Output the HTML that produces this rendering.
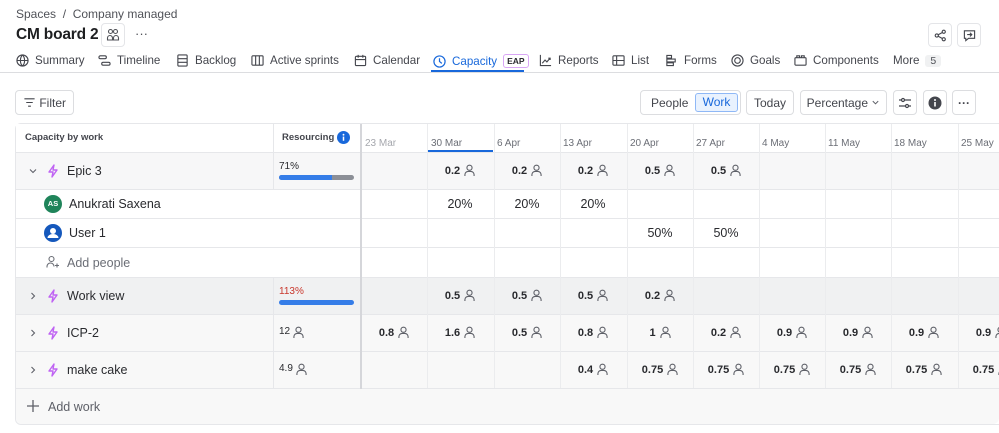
<!DOCTYPE html>
<html><head><meta charset="utf-8"><style>
*{box-sizing:border-box;margin:0;padding:0}
body{width:999px;height:433px;overflow:hidden;background:#fff;font-family:"Liberation Sans",sans-serif;color:#292a2e;position:relative}
.a{position:absolute}
.tab{position:absolute;top:54px;font-size:11.6px;color:#44464d;display:flex;align-items:center;gap:6px}
.tab svg{width:13px;height:13px}
.btn{position:absolute;border:1px solid #dcdde0;border-radius:4px;background:#fff;font-size:12px;color:#44464d;display:flex;align-items:center;justify-content:center}
.row{position:absolute;left:16px;width:983px;border-bottom:1px solid #e6e7ea}
.vl{position:absolute;top:124px;height:264px;width:1px;background:#ebecee}
.c{position:absolute;width:66px;text-align:center;font-size:11px;font-weight:bold;color:#292a2e;display:flex;align-items:center;justify-content:center;gap:4px}
.p{font-size:12.5px;font-weight:normal}
.dt{position:absolute;top:138px;font-size:10px;color:#6b6e76}
.nm{position:absolute;font-size:12.5px;color:#292a2e}
.chev{position:absolute;left:28px}
</style></head><body>
<svg width="0" height="0" style="position:absolute"><defs>
<symbol id="pi" viewBox="0 0 12 14"><circle cx="6" cy="4" r="2.8" fill="none" stroke="#5e6068" stroke-width="1.2"/><path d="M1 13v-1.5a3.5 3.5 0 0 1 3.5-3.5h3a3.5 3.5 0 0 1 3.5 3.5V13" fill="none" stroke="#5e6068" stroke-width="1.2"/></symbol>
<symbol id="ep" viewBox="0 0 14 14"><path d="M8 1L3 8h4l-1 5 5-7H7z" fill="none" stroke="#bf63f3" stroke-width="1.4" stroke-linejoin="round"/></symbol>
<symbol id="cr" viewBox="0 0 10 10"><path d="M3.5 2l3 3-3 3" fill="none" stroke="#5e6068" stroke-width="1.1"/></symbol>
<symbol id="cd" viewBox="0 0 10 10"><path d="M2 3.5l3 3 3-3" fill="none" stroke="#5e6068" stroke-width="1.1"/></symbol>
</defs></svg>

<div class="a" style="left:16px;top:7px;font-size:12px;color:#505258">Spaces &nbsp;/&nbsp; Company managed</div>
<div class="a" style="left:16px;top:26px;font-size:15.5px;font-weight:bold;color:#1e1f21;letter-spacing:-0.2px">CM board 2</div>
<div class="btn" style="left:101px;top:23px;width:24px;height:24px;border-color:#e4e5e8"><svg width="14" height="14" viewBox="0 0 14 14" fill="none" stroke="#505258" stroke-width="1.1"><circle cx="4.5" cy="3.5" r="2"/><circle cx="9.5" cy="3.5" r="2"/><path d="M1.5 12v-2a2.5 2.5 0 0 1 5 0v2zM7.5 12v-2a2.5 2.5 0 0 1 5 0v2z"/></svg></div>
<div class="a" style="left:135px;top:26px;font-size:13px;color:#505258">···</div>
<div class="btn" style="left:928px;top:23px;width:24px;height:24px;border-color:#e4e5e8"><svg width="13" height="13" viewBox="0 0 14 14" fill="none" stroke="#44464d" stroke-width="1.2"><circle cx="10.5" cy="3" r="1.7"/><circle cx="3" cy="7" r="1.7"/><circle cx="10.5" cy="11" r="1.7"/><path d="M4.5 6.2l4.5-2.4M4.5 7.8l4.5 2.4"/></svg></div>
<div class="btn" style="left:957px;top:23px;width:24px;height:24px;border-color:#e4e5e8"><svg width="13" height="13" viewBox="0 0 14 14" fill="none" stroke="#44464d" stroke-width="1.2"><path d="M1.5 2h11v8H6l-3 2.5V10H1.5z"/><path d="M4.5 6h5M7.5 4l2 2-2 2"/></svg></div>

<div class="tab" style="left:16px"><svg viewBox="0 0 14 14" fill="none" stroke="#44464d" stroke-width="1.2"><circle cx="7" cy="7" r="6"/><path d="M1 7h12M7 1c-3 3-3 9 0 12M7 1c3 3 3 9 0 12"/></svg>Summary</div>
<div class="tab" style="left:98px"><svg viewBox="0 0 14 14" fill="none" stroke="#44464d" stroke-width="1.2"><rect x="1" y="2" width="8" height="3" rx="1.5"/><rect x="4" y="9" width="9" height="3" rx="1.5"/></svg>Timeline</div>
<div class="tab" style="left:176px"><svg viewBox="0 0 14 14" fill="none" stroke="#44464d" stroke-width="1.2"><rect x="2" y="1" width="10" height="12" rx="1"/><path d="M2 5h10M2 9h10"/></svg>Backlog</div>
<div class="tab" style="left:251px"><svg viewBox="0 0 14 14" fill="none" stroke="#44464d" stroke-width="1.2"><rect x="1" y="2" width="12" height="10" rx="1"/><path d="M5 2v10M9 2v10"/></svg>Active sprints</div>
<div class="tab" style="left:354px"><svg viewBox="0 0 14 14" fill="none" stroke="#44464d" stroke-width="1.2"><rect x="1.5" y="2.5" width="11" height="10" rx="1"/><path d="M1.5 6h11M4.5 1v3M9.5 1v3"/></svg>Calendar</div>
<div class="tab" style="left:433px;color:#1868db"><svg viewBox="0 0 14 14" fill="none" stroke="#1868db" stroke-width="1.3"><circle cx="7" cy="7" r="6"/><path d="M7 3.5V7l2.5 2"/></svg>Capacity<span style="font-size:8.5px;font-weight:bold;color:#292a2e;border:1px solid #d9a6f5;border-radius:3px;padding:0 3px;line-height:12px">EAP</span></div>
<div class="a" style="left:431px;top:70px;width:93px;height:2px;background:#1868db"></div>
<div class="tab" style="left:539px"><svg viewBox="0 0 14 14" fill="none" stroke="#44464d" stroke-width="1.2"><path d="M1.5 1v11.5H13"/><path d="M3.5 10l3-3.5 2 2L12 4.5M10 4.5h2v2"/></svg>Reports</div>
<div class="tab" style="left:612px"><svg viewBox="0 0 14 14" fill="none" stroke="#44464d" stroke-width="1.2"><rect x="1" y="2" width="12" height="10" rx="1"/><path d="M1 7h12M5 2v10"/></svg>List</div>
<div class="tab" style="left:665px"><svg viewBox="0 0 14 14" fill="none" stroke="#44464d" stroke-width="1.2"><path d="M2 1.5h5v3H2zM2 5.5h9v3H2zM2 9.5h7v3H2z"/></svg>Forms</div>
<div class="tab" style="left:731px"><svg viewBox="0 0 14 14" fill="none" stroke="#44464d" stroke-width="1.2"><circle cx="7" cy="7" r="6"/><circle cx="7" cy="7" r="3"/></svg>Goals</div>
<div class="tab" style="left:794px"><svg viewBox="0 0 14 14" fill="none" stroke="#44464d" stroke-width="1.2"><rect x="1" y="4" width="12" height="8" rx="1"/><path d="M3 4V2h3v2M8 4V2h3v2"/></svg>Components</div>
<div class="tab" style="left:893px">More <span style="background:#f0f1f2;color:#505258;font-size:10.5px;padding:0 5px;border-radius:3px">5</span></div>
<div class="a" style="left:0;top:72px;width:999px;height:1px;background:#dcdde0"></div>

<div class="btn" style="left:15px;top:90px;width:59px;height:25px"><svg width="13" height="13" viewBox="0 0 14 14" fill="none" stroke="#44464d" stroke-width="1.2"><path d="M1.5 3h11M3.5 7h7M5.5 11h3"/></svg>&nbsp;Filter</div>
<div class="btn" style="left:640px;top:90px;width:101px;height:25px;justify-content:flex-start;padding-left:10px">People</div>
<div class="a" style="left:695px;top:93px;width:43px;height:19px;background:#e9f2fe;border:1px solid #8fb8f6;border-radius:3px;color:#1868db;font-size:12px;text-align:center;line-height:17px">Work</div>
<div class="btn" style="left:746px;top:90px;width:48px;height:25px">Today</div>
<div class="btn" style="left:800px;top:90px;width:87px;height:25px">Percentage&nbsp;<svg width="9" height="9"><use href="#cd"/></svg></div>
<div class="btn" style="left:893px;top:90px;width:24px;height:25px"><svg width="14" height="14" viewBox="0 0 14 14" fill="none" stroke="#44464d" stroke-width="1.2"><path d="M1 4h12M1 10h12"/><circle cx="5" cy="4" r="1.5" fill="#fff"/><circle cx="9" cy="10" r="1.5" fill="#fff"/></svg></div>
<div class="btn" style="left:923px;top:90px;width:24px;height:25px"><svg width="14" height="14" viewBox="0 0 14 14"><circle cx="7" cy="7" r="6.5" fill="#44464d"/><path d="M7 6v4.5" stroke="#fff" stroke-width="1.6"/><circle cx="7" cy="4" r="1" fill="#fff"/></svg></div>
<div class="btn" style="left:952px;top:90px;width:24px;height:25px;font-weight:bold">···</div>

<div class="a" style="left:15px;top:123px;width:990px;height:302px;border:1px solid #e6e7ea;border-radius:6px;overflow:hidden;background:#fff"></div>
<div class="row" style="top:124px;height:29px;background:#fff"></div>
<div class="row" style="top:153px;height:37px;background:#f7f7f8"></div>
<div class="row" style="top:190px;height:29px;background:#fff"></div>
<div class="row" style="top:219px;height:29px;background:#fff"></div>
<div class="row" style="top:248px;height:30px;background:#fff"></div>
<div class="row" style="top:278px;height:37px;background:#f0f1f2"></div>
<div class="row" style="top:315px;height:37px;background:#f8f8f8"></div>
<div class="row" style="top:352px;height:37px;background:#f8f8f8"></div>
<div class="a" style="left:16px;top:389px;width:983px;height:35px;background:#f8f8f8;border-radius:0 0 6px 6px"></div>

<div class="a" style="left:273px;top:124px;width:1px;height:66px;background:#e6e7ea"></div>
<div class="a" style="left:273px;top:278px;width:1px;height:111px;background:#e6e7ea"></div>
<div class="a" style="left:360px;top:124px;width:2px;height:265px;background:#d5d6da"></div>
<div class="vl" style="left:427px"></div><div class="vl" style="left:494px"></div><div class="vl" style="left:560px"></div><div class="vl" style="left:627px"></div><div class="vl" style="left:693px"></div><div class="vl" style="left:759px"></div><div class="vl" style="left:825px"></div><div class="vl" style="left:891px"></div><div class="vl" style="left:958px"></div>

<div class="a" style="left:25px;top:132px;font-size:9.5px;font-weight:bold;color:#44464d">Capacity by work</div>
<div class="a" style="left:282px;top:132px;font-size:9.5px;font-weight:bold;color:#44464d">Resourcing</div>
<svg class="a" style="left:337px;top:131px" width="13" height="13" viewBox="0 0 14 14"><circle cx="7" cy="7" r="7" fill="#1868db"/><path d="M7 6v4.5" stroke="#fff" stroke-width="1.6"/><circle cx="7" cy="4" r="1" fill="#fff"/></svg>
<div class="dt" style="left:365px;color:#a5a7ad">23 Mar</div>
<div class="dt" style="left:431px">30 Mar</div>
<div class="a" style="left:428px;top:150px;width:65px;height:2px;background:#1868db"></div>
<div class="dt" style="left:497px">6 Apr</div>
<div class="dt" style="left:563px">13 Apr</div>
<div class="dt" style="left:630px">20 Apr</div>
<div class="dt" style="left:696px">27 Apr</div>
<div class="dt" style="left:762px">4 May</div>
<div class="dt" style="left:828px">11 May</div>
<div class="dt" style="left:894px">18 May</div>
<div class="dt" style="left:961px">25 May</div>

<svg class="chev" style="top:166px" width="10" height="10"><use href="#cd"/></svg>
<svg class="a" style="left:46px;top:164px" width="14" height="14"><use href="#ep"/></svg>
<div class="nm" style="left:67px;top:164px">Epic 3</div>
<div class="a" style="left:279px;top:161px;font-size:10px">71%</div>
<div class="a" style="left:279px;top:175px;width:75px;height:5px;border-radius:3px;background:#8c8f97;overflow:hidden"><div style="width:53px;height:5px;background:#357de8"></div></div>
<div class="c" style="left:427px;top:164px">0.2<svg width="11" height="13"><use href="#pi"/></svg></div>
<div class="c" style="left:494px;top:164px">0.2<svg width="11" height="13"><use href="#pi"/></svg></div>
<div class="c" style="left:560px;top:164px">0.2<svg width="11" height="13"><use href="#pi"/></svg></div>
<div class="c" style="left:627px;top:164px">0.5<svg width="11" height="13"><use href="#pi"/></svg></div>
<div class="c" style="left:693px;top:164px">0.5<svg width="11" height="13"><use href="#pi"/></svg></div>

<div class="a" style="left:44px;top:195px;width:18px;height:18px;border-radius:50%;background:#1f845a;color:#fff;font-size:7.5px;font-weight:bold;text-align:center;line-height:18px">AS</div>
<div class="nm" style="left:69px;top:197px">Anukrati Saxena</div>
<div class="c p" style="left:427px;top:197px">20%</div>
<div class="c p" style="left:494px;top:197px">20%</div>
<div class="c p" style="left:560px;top:197px">20%</div>

<svg class="a" style="left:44px;top:224px" width="18" height="18" viewBox="0 0 18 18"><circle cx="9" cy="9" r="9" fill="#1558bc"/><circle cx="9" cy="7" r="3" fill="#fff"/><path d="M3.5 14a5.5 4 0 0 1 11 0z" fill="#fff"/></svg>
<div class="nm" style="left:69px;top:226px">User 1</div>
<div class="c p" style="left:627px;top:226px">50%</div>
<div class="c p" style="left:693px;top:226px">50%</div>

<svg class="a" style="left:46px;top:255px" width="14" height="14" viewBox="0 0 14 14" fill="none" stroke="#6b6e76" stroke-width="1.1"><circle cx="5.5" cy="4" r="2.5"/><path d="M1 12.5v-1a3.5 3.5 0 0 1 7 0M11 8.5v4M9 10.5h4"/></svg>
<div class="nm" style="left:67px;top:256px;color:#6b6e76">Add people</div>

<svg class="chev" style="top:291px" width="10" height="10"><use href="#cr"/></svg>
<svg class="a" style="left:46px;top:289px" width="14" height="14"><use href="#ep"/></svg>
<div class="nm" style="left:67px;top:289px">Work view</div>
<div class="a" style="left:279px;top:286px;font-size:10px;color:#c9372c">113%</div>
<div class="a" style="left:279px;top:300px;width:75px;height:5px;border-radius:3px;background:#357de8"></div>
<div class="c" style="left:427px;top:289px">0.5<svg width="11" height="13"><use href="#pi"/></svg></div>
<div class="c" style="left:494px;top:289px">0.5<svg width="11" height="13"><use href="#pi"/></svg></div>
<div class="c" style="left:560px;top:289px">0.5<svg width="11" height="13"><use href="#pi"/></svg></div>
<div class="c" style="left:627px;top:289px">0.2<svg width="11" height="13"><use href="#pi"/></svg></div>

<svg class="chev" style="top:328px" width="10" height="10"><use href="#cr"/></svg>
<svg class="a" style="left:46px;top:326px" width="14" height="14"><use href="#ep"/></svg>
<div class="nm" style="left:67px;top:326px">ICP-2</div>
<div class="a" style="left:279px;top:326px;font-size:10px;display:flex;gap:3px">12<svg width="11" height="13"><use href="#pi"/></svg></div>
<div class="c" style="left:361px;top:326px">0.8<svg width="11" height="13"><use href="#pi"/></svg></div>
<div class="c" style="left:427px;top:326px">1.6<svg width="11" height="13"><use href="#pi"/></svg></div>
<div class="c" style="left:494px;top:326px">0.5<svg width="11" height="13"><use href="#pi"/></svg></div>
<div class="c" style="left:560px;top:326px">0.8<svg width="11" height="13"><use href="#pi"/></svg></div>
<div class="c" style="left:627px;top:326px">1<svg width="11" height="13"><use href="#pi"/></svg></div>
<div class="c" style="left:693px;top:326px">0.2<svg width="11" height="13"><use href="#pi"/></svg></div>
<div class="c" style="left:759px;top:326px">0.9<svg width="11" height="13"><use href="#pi"/></svg></div>
<div class="c" style="left:825px;top:326px">0.9<svg width="11" height="13"><use href="#pi"/></svg></div>
<div class="c" style="left:891px;top:326px">0.9<svg width="11" height="13"><use href="#pi"/></svg></div>
<div class="c" style="left:958px;top:326px">0.9<svg width="11" height="13"><use href="#pi"/></svg></div>

<svg class="chev" style="top:365px" width="10" height="10"><use href="#cr"/></svg>
<svg class="a" style="left:46px;top:363px" width="14" height="14"><use href="#ep"/></svg>
<div class="nm" style="left:67px;top:363px">make cake</div>
<div class="a" style="left:279px;top:363px;font-size:10px;display:flex;gap:3px">4.9<svg width="11" height="13"><use href="#pi"/></svg></div>
<div class="c" style="left:560px;top:363px">0.4<svg width="11" height="13"><use href="#pi"/></svg></div>
<div class="c" style="left:627px;top:363px">0.75<svg width="11" height="13"><use href="#pi"/></svg></div>
<div class="c" style="left:693px;top:363px">0.75<svg width="11" height="13"><use href="#pi"/></svg></div>
<div class="c" style="left:759px;top:363px">0.75<svg width="11" height="13"><use href="#pi"/></svg></div>
<div class="c" style="left:825px;top:363px">0.75<svg width="11" height="13"><use href="#pi"/></svg></div>
<div class="c" style="left:891px;top:363px">0.75<svg width="11" height="13"><use href="#pi"/></svg></div>
<div class="c" style="left:958px;top:363px">0.75<svg width="11" height="13"><use href="#pi"/></svg></div>

<svg class="a" style="left:27px;top:400px" width="12" height="12" viewBox="0 0 12 12"><path d="M6 0v12M0 6h12" stroke="#5e6068" stroke-width="1.3"/></svg>
<div class="nm" style="left:48px;top:400px;color:#5e6068">Add work</div>
</body></html>
